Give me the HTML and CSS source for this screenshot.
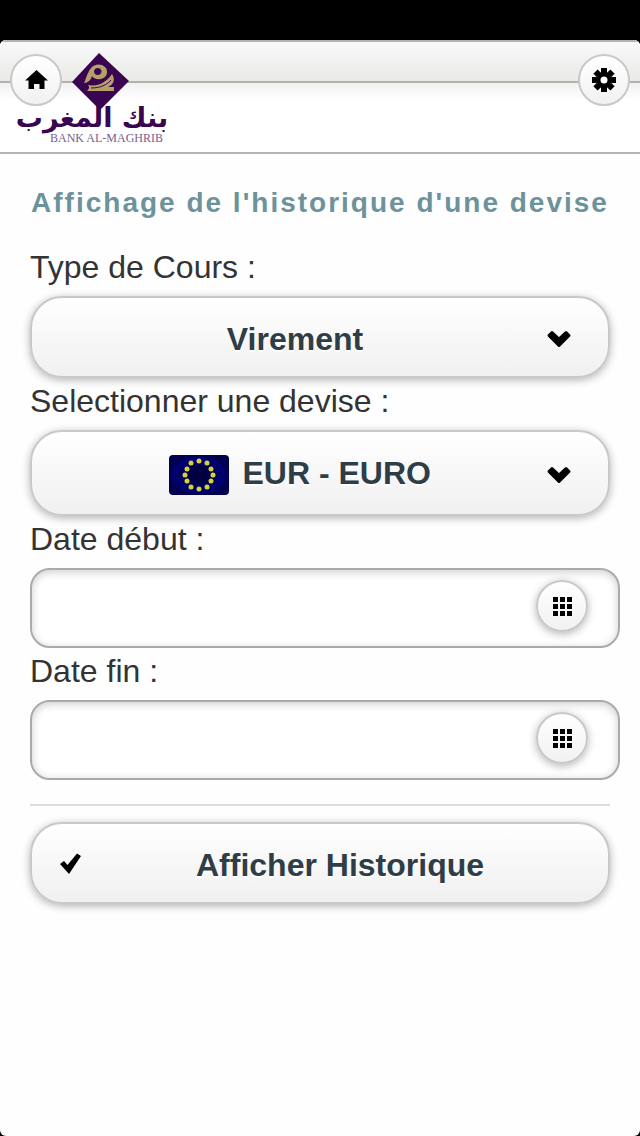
FILE: index.html
```
<!DOCTYPE html>
<html lang="fr">

<head>
    <meta charset="utf-8">
    <meta name="viewport" content="width=device-width, initial-scale=1">
    <title>Bank Al-Maghrib</title>
    <link rel="stylesheet" href="styles.css">
</head>

<body>
    <div class="page">
        <header class="header">
            <button type="button" class="round" aria-label="Accueil">
                <svg width="24" height="24" viewBox="0 0 24 24">
                    <path d="M12.500 2 L24 12.500 H20.500 V21 H15.500 V16 H10 V21 H4.500 V12.500 H1 Z" />
                </svg>
            </button>
            <svg class="logo" width="156" height="96" viewBox="0 0 156 96" role="img" aria-label="Bank Al-Maghrib">
                <path class="diamond" d="M85 1 L115 29 L86 58 L58 30 Z" />
                <path class="gold" fill-rule="evenodd" d="M70 31 C72 27 73 21 77 16 C80 12 87 11 91 15 C95 19 93 26 87 27 C83 28 79 26 78 24 C77 28 74 31 70 31 Z M83 16 C79 17 79 22 83 23 C88 24 90 16 83 16 Z" />
                <path class="gold" d="M74 33 C80 34 86 33 90 30 C93 28 96 25 98 22 C102 28 99 33 94 35 H100 V39 H73 C75 37 76 35 74 33 Z" />
                <path class="cut" d="M77 36 C86 36 93 33 97 28" />
                <text class="arabic" x="78" y="75" direction="rtl" text-anchor="middle">بنك المغرب</text>
                <text class="latin" x="36" y="90">BANK AL-MAGHRIB</text>
            </svg>
            <button type="button" class="round" aria-label="Paramètres">
                <svg width="26" height="26" viewBox="-13 -13 26 26">
                    <g>
                        <rect x="-3" y="-12" width="6" height="24" />
                        <rect x="-3" y="-12" width="6" height="24" transform="rotate(45)" />
                        <rect x="-3" y="-12" width="6" height="24" transform="rotate(90)" />
                        <rect x="-3" y="-12" width="6" height="24" transform="rotate(135)" />
                        <circle r="8" />
                    </g>
                    <circle class="hole" r="3.500" />
                </svg>
            </button>
        </header>

        <main class="content">
            <h1>Affichage de l'historique d'une devise</h1>
            <form>
                <label for="type">Type de Cours :</label>
                <div class="button">
                    <select id="type" class="wide">
                        <option>Virement</option>
                    </select>
                    <svg class="arrow" width="26" height="18" viewBox="0 0 26 18">
                        <path d="M3 5.500 L6 2.500 L13 9 L20 2.500 L23 5.500 L13 15.500 Z" />
                    </svg>
                </div>

                <label for="devise">Selectionner une devise :</label>
                <div class="button devise">
                    <svg class="flag" width="60" height="40" viewBox="0 0 60 40">
                        <defs>
                            <radialGradient id="blue">
                                <stop offset="0" stop-color="#00003c" />
                                <stop offset="0.500" stop-color="#000050" />
                                <stop offset="0.800" stop-color="#000078" />
                                <stop offset="1" stop-color="#00004e" />
                            </radialGradient>
                        </defs>
                        <rect width="60" height="40" rx="4" fill="url(#blue)" />
                        <g class="stars">
                            <circle cx="30" cy="6" r="2.500" />
                            <circle cx="38" cy="8" r="2.500" />
                            <circle cx="42" cy="14" r="2.500" />
                            <circle cx="44" cy="20" r="2.500" />
                            <circle cx="42" cy="26" r="2.500" />
                            <circle cx="38" cy="32" r="2.500" />
                            <circle cx="30" cy="34" r="2.500" />
                            <circle cx="22" cy="32" r="2.500" />
                            <circle cx="18" cy="26" r="2.500" />
                            <circle cx="16" cy="20" r="2.500" />
                            <circle cx="18" cy="14" r="2.500" />
                            <circle cx="22" cy="8" r="2.500" />
                        </g>
                    </svg>
                    <select id="devise">
                        <option>EUR - EURO</option>
                    </select>
                    <svg class="arrow" width="26" height="18" viewBox="0 0 26 18">
                        <path d="M3 5.500 L6 2.500 L13 9 L20 2.500 L23 5.500 L13 15.500 Z" />
                    </svg>
                </div>

                <label for="debut">Date début :</label>
                <div class="date">
                    <input type="text" id="debut">
                    <button type="button" class="round" aria-label="Choisir la date de début">
                        <svg width="20" height="20" viewBox="0 0 20 20">
                            <path d="M1 1h5v5h-5z M8 1h5v5h-5z M15 1h5v5h-5z M1 8h5v5h-5z M8 8h5v5h-5z M15 8h5v5h-5z M1 15h5v5h-5z M8 15h5v5h-5z M15 15h5v5h-5z" />
                        </svg>
                    </button>
                </div>

                <label for="fin">Date fin :</label>
                <div class="date">
                    <input type="text" id="fin">
                    <button type="button" class="round" aria-label="Choisir la date de fin">
                        <svg width="20" height="20" viewBox="0 0 20 20">
                            <path d="M1 1h5v5h-5z M8 1h5v5h-5z M15 1h5v5h-5z M1 8h5v5h-5z M8 8h5v5h-5z M15 8h5v5h-5z M1 15h5v5h-5z M8 15h5v5h-5z M15 15h5v5h-5z" />
                        </svg>
                    </button>
                </div>

                <hr>
                <button type="submit" class="button submit">
                    <svg class="check" width="24" height="24" viewBox="0 0 24 24">
                        <path d="M2 11 L6 8 L9.500 12 L19 0.500 L23 3 L11 21 Z" />
                    </svg>
                    Afficher Historique
                </button>
            </form>
        </main>
    </div>
</body>

</html>
```

FILE: styles.css
```
:root {
    --text: #333;
    --dark: #2f3e46;
    --title: #6c939b;
    --border: #c8c8c8;
    --purple: #3a0550;
}

* {
    box-sizing: border-box;
}

body {
    margin: 0;
    padding-top: 40px;
    min-height: 100vh;
    display: flex;
    flex-direction: column;
    background-color: black;
    color: var(--text);
    font-family: "Liberation Sans", Arial, sans-serif;
    font-size: 32px;
}

.page {
    flex: 1;
    background-color: #fefefe;
    border-radius: 6px;
    overflow: hidden;
}

.header {
    position: relative;
    display: flex;
    justify-content: space-between;
    align-items: flex-start;
    height: 114px;
    padding: 12px 10px;
    border-top: 2px solid #b3b3b3;
    border-bottom: 2px solid #b3b3b3;
    background:
        linear-gradient(#f9f9f9, #e9e9e7) 0 0 / 100% 39px no-repeat,
        linear-gradient(#b3b1a8, #b3b1a8) 0 39px / 100% 2px no-repeat,
        linear-gradient(#f0f0f0, #fff) 0 41px / 100% 16px no-repeat,
        white;
}

.round {
    display: flex;
    justify-content: center;
    align-items: center;
    width: 52px;
    height: 52px;
    padding: 0;
    border: 2px solid var(--border);
    border-radius: 50%;
    background: linear-gradient(#fff, #f1f1f1);
}

/* the logo runs under the home button */
.logo {
    position: absolute;
    left: 14px;
    top: 10px;
    pointer-events: none;
}

.diamond {
    fill: var(--purple);
}

.gold {
    fill: #b5a06a;
}

.cut {
    fill: none;
    stroke: var(--purple);
    stroke-width: 1;
}

.arabic {
    fill: var(--purple);
    font-family: "DejaVu Sans", sans-serif;
    font-size: 27px;
    font-weight: bold;
}

.latin {
    fill: #79608c;
    font-family: "Liberation Serif", serif;
    font-size: 12px;
}

.hole {
    fill: white;
}

.content {
    padding: 28px 30px;
}

h1 {
    margin: 0 0 20px;
    color: var(--title);
    font-size: 28px;
    line-height: 42px;
    letter-spacing: 2px;
    text-align: center;
    white-space: nowrap;
}

label {
    display: block;
    margin-bottom: 6px;
    line-height: 46px;
}

.button {
    position: relative;
    display: flex;
    justify-content: center;
    align-items: center;
    width: 100%;
    height: 82px;
    padding: 4px 0 0;
    border: 2px solid var(--border);
    border-radius: 32px;
    background: linear-gradient(#fff, #f0f0f0);
    box-shadow: 0 2px 8px rgba(0, 0, 0, 0.3);
    color: var(--dark);
    font: bold 32px "Liberation Sans", Arial, sans-serif;
    text-shadow: 0 2px 0 white;
}

.button select {
    appearance: none;
    height: 74px;
    padding: 0;
    border: 0;
    background: none;
    color: inherit;
    font: inherit;
    text-shadow: inherit;
}

.button .wide {
    width: 100%;
    padding-right: 50px;
    border-radius: 32px;
    text-align-last: center;
}

.devise {
    height: 86px;
    gap: 14px;
    padding-right: 40px;
}

.devise select {
    padding-bottom: 4px;
}

.stars {
    fill: #d8d03c;
}

.arrow {
    position: absolute;
    right: 36px;
    pointer-events: none;
}

.arrow path {
    stroke: black;
    stroke-width: 3;
    stroke-linejoin: round;
}

.date {
    position: relative;
    margin-right: -10px;
}

.date input {
    display: block;
    width: 100%;
    height: 80px;
    padding: 0 90px 0 16px;
    border: 2px solid #aaa;
    border-radius: 20px;
    background-color: white;
    box-shadow: inset 0 2px 8px rgba(0, 0, 0, 0.2);
    color: var(--text);
    font: inherit;
}

.date .round {
    position: absolute;
    top: 12px;
    right: 32px;
    box-shadow: 0 2px 8px rgba(0, 0, 0, 0.3);
}

hr {
    margin: 24px 0 16px;
    border: 0;
    border-top: 2px solid #ddd;
}

.submit {
    padding-left: 40px;
}

.check {
    position: absolute;
    left: 26px;
}
```
